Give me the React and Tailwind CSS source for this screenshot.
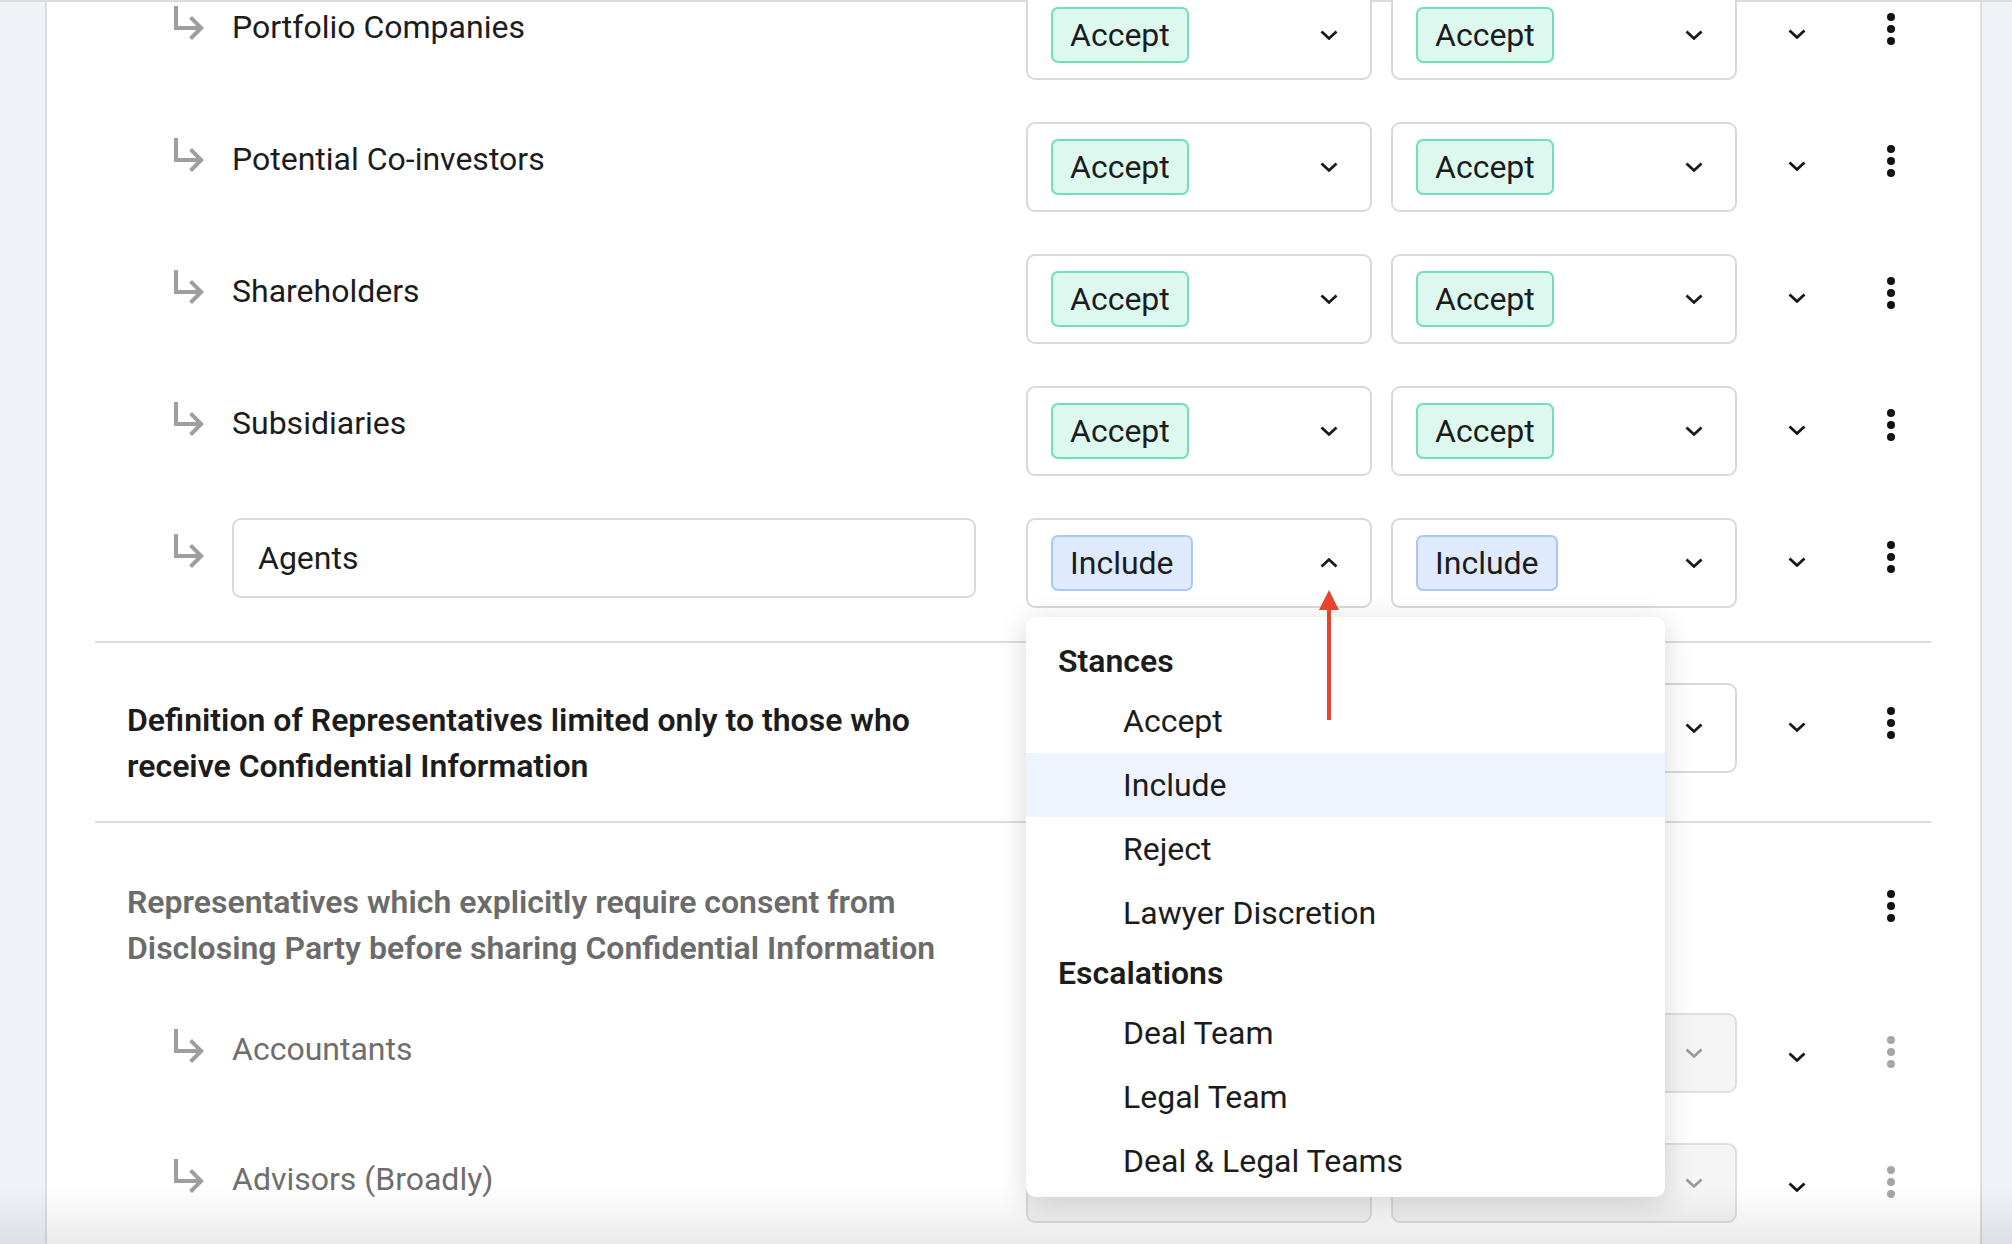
import React from "react";

// Small chevron used in selects and the row expand toggle
function Chevron({ up = false, className = "" }) {
  return (
    <svg width="18" height="10" viewBox="0 0 18 10" className={className}>
      <polyline
        points={up ? "1.5,8.6 9,1.6 16.5,8.6" : "1.5,1.4 9,8.4 16.5,1.4"}
        fill="none"
        stroke="currentColor"
        strokeWidth="2.8"
      />
    </svg>
  );
}

function Kebab({ muted = false }) {
  const tone = muted ? "bg-[#a6a6a6]" : "bg-[#111111]";
  return (
    <div className="flex flex-col items-center gap-[4px]">
      <span className={`w-[8px] h-[8px] rounded-full ${tone}`} />
      <span className={`w-[8px] h-[8px] rounded-full ${tone}`} />
      <span className={`w-[8px] h-[8px] rounded-full ${tone}`} />
    </div>
  );
}

// "subdirectory arrow right" marker for nested rows
function SubArrow() {
  return (
    <svg width="48" height="48" viewBox="0 0 24 24" className="shrink-0 mt-[8px]">
      <path
        fill="#9e9e9e"
        d="M19 15l-6 6-1.42-1.42L15.17 16H4V4h2v10h9.17l-3.59-3.58L13 9l6 6z"
      />
    </svg>
  );
}

function Badge({ kind, children }) {
  const tone =
    kind === "accept"
      ? "bg-[#ddf8ee] border-[#70e0b6]"
      : "bg-[#dfebfd] border-[#a8c9f5]";
  return (
    <span
      className={`h-[56px] px-[17px] flex items-center border-2 rounded-[7px] text-[32px] leading-none text-[#1c1c1c] ${tone}`}
    >
      {children}
    </span>
  );
}

function SelectBox({ value, kind, open = false, disabled = false }) {
  const frame = disabled
    ? "h-[80px] bg-[#f5f5f5] border-[#dedede]"
    : "h-[90px] bg-white border-[#d9d9d9]";
  return (
    <div
      className={`border-2 rounded-[9px] flex items-center justify-between pl-[23px] pr-[32px] ${frame}`}
    >
      {value ? <Badge kind={kind}>{value}</Badge> : <span />}
      <Chevron
        up={open}
        className={disabled ? "text-[#9b9b9b]" : "text-[#1a1a1a]"}
      />
    </div>
  );
}

function RowShell({ left, s1, s2, chev = true, kebab = true, muted = false, kebabTop = "mt-[23px]" }) {
  return (
    <div className="flex items-start">
      <div className="w-[931px] shrink-0">{left}</div>
      <div className="w-[346px] shrink-0 relative">{s1}</div>
      <div className="ml-[19px] w-[346px] shrink-0">{s2}</div>
      <div className="ml-[40px] w-[40px] shrink-0 flex justify-center">
        {chev && (
          <div className="mt-[39px] h-[10px] flex">
            <Chevron className="text-[#151515]" />
          </div>
        )}
      </div>
      <div className="ml-[54px] w-[40px] shrink-0 flex justify-center">
        {kebab && (
          <div className={kebabTop}>
            <Kebab muted={muted} />
          </div>
        )}
      </div>
    </div>
  );
}

function ChildLabel({ children, muted = false, top = "mt-[13px]" }) {
  return (
    <div className="flex items-start pl-[71px] gap-[18px]">
      <SubArrow />
      <span
        className={`${top} text-[32px] leading-[48px] whitespace-nowrap ${
          muted ? "text-[#6e6e6e]" : "text-[#1c1c1c]"
        }`}
      >
        {children}
      </span>
    </div>
  );
}

function StanceMenu() {
  const stances = ["Accept", "Include", "Reject", "Lawyer Discretion"];
  const escalations = ["Deal Team", "Legal Team", "Deal & Legal Teams"];
  return (
    <div className="absolute left-0 top-[99px] w-[639px] z-20 bg-white rounded-[10px] shadow-[0_6px_30px_rgba(0,0,0,0.16)] pt-[16px] pb-[4px]">
      <div className="h-[56px] flex items-center pl-[32px] text-[32px] font-semibold text-[#1c1c1c]">
        Stances
      </div>
      {stances.map((s) => (
        <div
          key={s}
          className={`h-[64px] flex items-center pl-[97px] text-[32px] text-[#1c1c1c] ${
            s === "Include" ? "bg-[#edf4fe]" : ""
          }`}
        >
          {s}
        </div>
      ))}
      <div className="h-[56px] flex items-center pl-[32px] text-[32px] font-semibold text-[#1c1c1c]">
        Escalations
      </div>
      {escalations.map((s) => (
        <div key={s} className="h-[64px] flex items-center pl-[97px] text-[32px] text-[#1c1c1c]">
          {s}
        </div>
      ))}
    </div>
  );
}

function PointerArrow() {
  return (
    <svg
      width="20"
      height="130"
      viewBox="0 0 20 130"
      className="absolute left-[293px] top-[72px] z-30 pointer-events-none"
    >
      <polygon points="10,0 0,20 20,20" fill="#e8432b" />
      <rect x="8" y="19" width="4" height="111" fill="#e8432b" />
    </svg>
  );
}

export default function App() {
  const accepted = ["Portfolio Companies", "Potential Co-investors", "Shareholders", "Subsidiaries"];
  return (
    <div className="relative w-[2012px] h-[1244px] overflow-hidden bg-white font-[Roboto,sans-serif] text-[#1c1c1c]">
      <div className="flex flex-col h-full">
        <div className="h-[2px] shrink-0 bg-[#dcdcdc]" />
        <div className="flex flex-1 min-h-0">
          <aside className="w-[47px] shrink-0 bg-[#eff3f8] border-r-2 border-[#dcdcdc]" />
          <main className="flex-1 min-w-0 pl-[48px] pr-[49px]">
            <div className="-mt-[12px]">
              {/* nested representative types */}
              <section className="flex flex-col gap-[42px] pb-[33px] border-b-2 border-[#dcdcdc]">
                {accepted.map((name) => (
                  <RowShell
                    key={name}
                    left={<ChildLabel>{name}</ChildLabel>}
                    s1={<SelectBox value="Accept" kind="accept" />}
                    s2={<SelectBox value="Accept" kind="accept" />}
                  />
                ))}
                <RowShell
                  left={
                    <div className="flex items-start pl-[71px] gap-[18px]">
                      <SubArrow />
                      <div className="w-[744px] h-[80px] border-2 border-[#d9d9d9] rounded-[9px] flex items-center px-[24px] text-[32px] text-[#1c1c1c]">
                        Agents
                      </div>
                    </div>
                  }
                  s1={
                    <>
                      <SelectBox value="Include" kind="include" open />
                      <StanceMenu />
                      <PointerArrow />
                    </>
                  }
                  s2={<SelectBox value="Include" kind="include" />}
                />
              </section>

              <section className="pt-[40px] pb-[32px] border-b-2 border-[#dcdcdc]">
                <RowShell
                  kebabTop="mt-[24px]"
                  left={
                    <p className="mt-[14px] pl-[32px] text-[32px] leading-[46px] font-semibold text-[#1c1c1c]">
                      Definition of Representatives limited only to those who
                      <br />
                      receive Confidential Information
                    </p>
                  }
                  s1={<SelectBox value="Accept" kind="accept" />}
                  s2={<SelectBox value="Accept" kind="accept" />}
                />
              </section>

              <section className="pt-[56px]">
                <RowShell
                  chev={false}
                  kebabTop="mt-[11px]"
                  left={
                    <p className="pl-[32px] text-[32px] leading-[46px] font-semibold text-[#6b6b6b]">
                      Representatives which explicitly require consent from
                      <br />
                      Disclosing Party before sharing Confidential Information
                    </p>
                  }
                  s1={null}
                  s2={null}
                />
                <div className="mt-[42px] flex flex-col gap-[50px]">
                  {["Accountants", "Advisors (Broadly)"].map((name) => (
                    <RowShell
                      key={name}
                      muted
                      left={
                        <ChildLabel muted top="mt-[12px]">
                          {name}
                        </ChildLabel>
                      }
                      s1={<SelectBox disabled />}
                      s2={<SelectBox disabled />}
                    />
                  ))}
                </div>
              </section>
            </div>
          </main>
          <aside className="w-[32px] shrink-0 bg-[#eff3f8] border-l-2 border-[#dcdcdc]" />
        </div>
      </div>
      <div className="absolute inset-x-0 bottom-0 h-[58px] z-10 pointer-events-none bg-linear-to-b from-transparent to-black/[0.08]" />
    </div>
  );
}
